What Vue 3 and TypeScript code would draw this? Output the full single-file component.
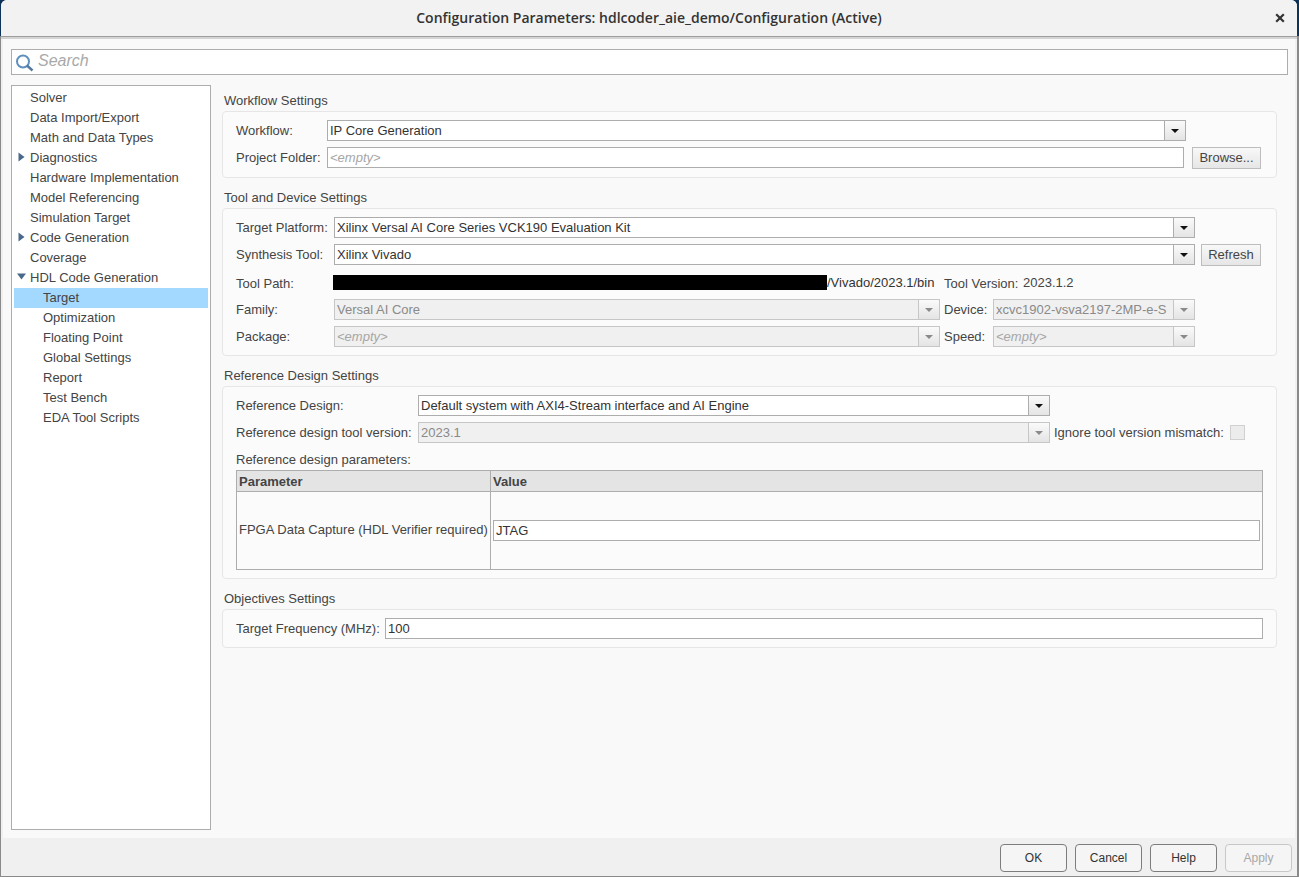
<script setup lang="ts">
const tree = [
  { label: 'Solver', level: 0 },
  { label: 'Data Import/Export', level: 0 },
  { label: 'Math and Data Types', level: 0 },
  { label: 'Diagnostics', level: 0, arrow: 'right' },
  { label: 'Hardware Implementation', level: 0 },
  { label: 'Model Referencing', level: 0 },
  { label: 'Simulation Target', level: 0 },
  { label: 'Code Generation', level: 0, arrow: 'right' },
  { label: 'Coverage', level: 0 },
  { label: 'HDL Code Generation', level: 0, arrow: 'down' },
  { label: 'Target', level: 1, selected: true },
  { label: 'Optimization', level: 1 },
  { label: 'Floating Point', level: 1 },
  { label: 'Global Settings', level: 1 },
  { label: 'Report', level: 1 },
  { label: 'Test Bench', level: 1 },
  { label: 'EDA Tool Scripts', level: 1 },
]
</script>

<template>
  <div class="window">
    <header class="titlebar">
      <h1 class="title">Configuration Parameters: hdlcoder_aie_demo/Configuration (Active)</h1>
      <svg class="close" width="10" height="10" viewBox="0 0 10 10" aria-label="Close">
        <path d="M1.2 1.2 8.8 8.8M8.8 1.2 1.2 8.8" stroke="#333" stroke-width="2.2" fill="none" />
      </svg>
    </header>
    <div class="band"></div>

    <main class="body">
      <div class="search">
        <svg width="18" height="20" viewBox="0 0 18 20" class="search-icon">
          <circle cx="7" cy="8.5" r="6" fill="none" stroke="#5f8fbd" stroke-width="2" />
          <path d="M11 12.5 16.5 17.5" stroke="#557a9f" stroke-width="2.4" fill="none" />
        </svg>
        <span class="search-text">Search</span>
      </div>

      <div class="columns">
        <nav class="tree">
          <div
            v-for="item in tree"
            :key="item.label"
            class="tree-row"
            :class="{ selected: item.selected, child: item.level === 1 }"
          >
            <svg v-if="item.arrow === 'right'" class="arrow" width="7" height="10" viewBox="0 0 7 10">
              <path d="M0.5 0.5 6.5 5 0.5 9.5Z" fill="#4a6a8c" />
            </svg>
            <svg v-if="item.arrow === 'down'" class="arrow down" width="9" height="7" viewBox="0 0 9 7">
              <path d="M0 0.5H9L4.5 6.5Z" fill="#4a6a8c" />
            </svg>
            {{ item.label }}
          </div>
        </nav>

        <section class="settings">
          <h2>Workflow Settings</h2>
          <div class="panel p-workflow">
            <div class="row">
              <label class="l91">Workflow:</label>
              <div class="combo w859">
                <span class="value">IP Core Generation</span>
                <span class="drop"><i class="tri"></i></span>
              </div>
            </div>
            <div class="row">
              <label class="l91">Project Folder:</label>
              <div class="field w857"><em>&lt;empty&gt;</em></div>
              <button class="btn browse">Browse...</button>
            </div>
          </div>

          <h2>Tool and Device Settings</h2>
          <div class="panel p-tool">
            <div class="row">
              <label class="l98">Target Platform:</label>
              <div class="combo w861">
                <span class="value">Xilinx Versal AI Core Series VCK190 Evaluation Kit</span>
                <span class="drop"><i class="tri"></i></span>
              </div>
            </div>
            <div class="row">
              <label class="l98">Synthesis Tool:</label>
              <div class="combo w861">
                <span class="value">Xilinx Vivado</span>
                <span class="drop"><i class="tri"></i></span>
              </div>
              <button class="btn refresh">Refresh</button>
            </div>
            <div class="row path-row">
              <label class="l97">Tool Path:</label>
              <span class="redact"></span>
              <span class="path">/Vivado/2023.1/bin</span>
              <label class="tv-label">Tool Version:</label>
              <span class="tv">2023.1.2</span>
            </div>
            <div class="row">
              <label class="l98">Family:</label>
              <div class="combo disabled w606">
                <span class="value">Versal AI Core</span>
                <span class="drop"><i class="tri"></i></span>
              </div>
              <label class="side">Device:</label>
              <div class="combo disabled w202">
                <span class="value">xcvc1902-vsva2197-2MP-e-S</span>
                <span class="drop"><i class="tri"></i></span>
              </div>
            </div>
            <div class="row">
              <label class="l98">Package:</label>
              <div class="combo disabled w606">
                <span class="value"><em>&lt;empty&gt;</em></span>
                <span class="drop"><i class="tri"></i></span>
              </div>
              <label class="side">Speed:</label>
              <div class="combo disabled w202">
                <span class="value"><em>&lt;empty&gt;</em></span>
                <span class="drop"><i class="tri"></i></span>
              </div>
            </div>
          </div>

          <h2>Reference Design Settings</h2>
          <div class="panel p-ref">
            <div class="row">
              <label class="l182">Reference Design:</label>
              <div class="combo w632">
                <span class="value">Default system with AXI4-Stream interface and AI Engine</span>
                <span class="drop"><i class="tri"></i></span>
              </div>
            </div>
            <div class="row">
              <label class="l182">Reference design tool version:</label>
              <div class="combo disabled w632">
                <span class="value">2023.1</span>
                <span class="drop"><i class="tri"></i></span>
              </div>
              <label class="ignore">Ignore tool version mismatch:</label>
              <span class="check"></span>
            </div>
            <div class="params-label">Reference design parameters:</div>
            <div class="table">
              <div class="thead">
                <div class="c1">Parameter</div>
                <div class="c2">Value</div>
              </div>
              <div class="tbody">
                <div class="c1">FPGA Data Capture (HDL Verifier required)</div>
                <div class="c2"><div class="field jtag">JTAG</div></div>
              </div>
            </div>
          </div>

          <h2>Objectives Settings</h2>
          <div class="panel p-obj">
            <div class="row">
              <label class="l149">Target Frequency (MHz):</label>
              <div class="field w878">100</div>
            </div>
          </div>
        </section>
      </div>
    </main>

    <footer class="footer">
      <button class="fbtn">OK</button>
      <button class="fbtn">Cancel</button>
      <button class="fbtn">Help</button>
      <button class="fbtn off">Apply</button>
    </footer>
  </div>
</template>

<style scoped>
.window {
  width: 1296px;
  height: 877px;
  margin-left: 1px;
  box-sizing: border-box;
  display: flex;
  flex-direction: column;
  overflow: hidden;
  background: #f9f9f9;
  border-bottom: 1px solid #8a8a8a;
  border-radius: 6px 6px 0 0;
  font: 13px/15px "Liberation Sans", Arial, sans-serif;
  color: #444;
}
.titlebar {
  height: 36px;
  flex: none;
  background: #f2f2f2;
  border-bottom: 1px solid #9d9d9d;
  display: flex;
  align-items: center;
  justify-content: center;
  position: relative;
}
.title {
  margin: 0;
  font: 600 14px/18px "Open Sans", "Liberation Sans", sans-serif;
  color: #333;
}
.close {
  position: absolute;
  right: 12px;
  top: 13px;
}
.band {
  height: 2px;
  flex: none;
  background: #d4d4d4;
}
.body {
  flex: 1;
  min-height: 0;
  padding: 10px 7px 0 8px;
  border-left: 2px solid #f0f0f0;
  border-right: 2px solid #f0f0f0;
  display: flex;
  flex-direction: column;
}
.search {
  height: 26px;
  flex: none;
  box-sizing: border-box;
  background: #fff;
  border: 1px solid #adadad;
  display: flex;
  align-items: center;
  padding-left: 4px;
  gap: 4px;
  font: italic 16px/20px "Liberation Sans", sans-serif;
  color: #a9a9a9;
}
.search-icon {
  margin-top: 2px;
}
.search-text {
  margin-bottom: 2px;
}
.columns {
  flex: 1;
  min-height: 0;
  display: flex;
  margin-top: 10px;
  margin-bottom: 8px;
}
.tree {
  width: 200px;
  flex: none;
  box-sizing: border-box;
  background: #fff;
  border: 1px solid #adadad;
  padding: 2px;
}
.tree-row {
  height: 20px;
  line-height: 20px;
  padding-left: 16px;
  position: relative;
}
.tree-row.child {
  padding-left: 29px;
}
.tree-row.selected {
  background: #a3d8ff;
}
.arrow {
  position: absolute;
  left: 4px;
  top: 4px;
}
.arrow.down {
  left: 3px;
  top: 5px;
}
.settings {
  flex: 1;
  min-width: 0;
  padding: 8px 11px 0 11px;
}
h2 {
  margin: 0 0 3px 2px;
  font: 13px/15px "Liberation Sans", Arial, sans-serif;
  color: #444;
  height: 15px;
}
.panel {
  box-sizing: border-box;
  background: #fbfbfb;
  border: 1px solid #e6e6e6;
  border-radius: 4px;
  padding: 8px 0 0 13px;
  display: flex;
  flex-direction: column;
  gap: 6px;
  margin-bottom: 12px;
}
.p-workflow {
  height: 67px;
}
.p-tool {
  height: 148px;
}
.p-ref {
  height: 193px;
}
.p-obj {
  height: 39px;
  margin-bottom: 0;
}
.row {
  display: flex;
  align-items: center;
  height: 21px;
  flex: none;
}
label {
  flex: none;
  white-space: nowrap;
}
.l91 { width: 91px; }
.l97 { width: 97px; }
.l98 { width: 98px; }
.l182 { width: 182px; }
.l149 { width: 149px; }
.combo,
.field {
  box-sizing: border-box;
  height: 21px;
  flex: none;
  background: #fff;
  border: 1px solid #adadad;
  display: flex;
  align-items: center;
  overflow: hidden;
  color: #333;
}
.field {
  padding-left: 2px;
}
em {
  color: #a6a6a6;
  font-style: italic;
}
.value {
  flex: 1;
  min-width: 0;
  padding-left: 2px;
  white-space: nowrap;
  overflow: hidden;
}
.drop {
  width: 21px;
  height: 19px;
  flex: none;
  box-sizing: border-box;
  border-left: 1px solid #adadad;
  background: linear-gradient(#fafafa, #e4e4e4);
  display: flex;
  align-items: center;
  justify-content: center;
}
.tri {
  width: 0;
  height: 0;
  border-left: 4px solid transparent;
  border-right: 4px solid transparent;
  border-top: 4px solid #111;
  margin-top: 1px;
}
.disabled {
  background: #f0f0f0;
  border-color: #c6c6c6;
  color: #8a8a8a;
}
.disabled .drop {
  border-left-color: #c6c6c6;
}
.disabled .tri {
  border-top-color: #8a8a8a;
}
.w859 { width: 859px; }
.w857 { width: 857px; }
.w861 { width: 861px; }
.w606 { width: 606px; }
.w202 { width: 202px; }
.w632 { width: 632px; }
.w878 { width: 878px; }
.btn {
  box-sizing: border-box;
  height: 22px;
  padding: 0;
  font: 13px/15px "Liberation Sans", Arial, sans-serif;
  color: #444;
  background: linear-gradient(#f8f8f8, #e6e6e6);
  border: 1px solid #bdbdbd;
  flex: none;
}
.browse {
  width: 69px;
  margin-left: 8px;
}
.refresh {
  width: 60px;
  margin-left: 6px;
}
.path-row {
  height: 15px;
  margin: 4px 0 3px;
}
.path-row .l97 {
  margin-top: 2px;
}
.redact {
  width: 494px;
  height: 15px;
  background: #000;
  flex: none;
}
.path {
  width: 117px;
  flex: none;
  color: #333;
}
.tv-label {
  width: 79px;
  margin-top: 2px;
}
.tv {
  color: #444;
}
.side {
  width: 53px;
  padding-left: 4px;
  box-sizing: border-box;
}
.ignore {
  margin-left: 4px;
  width: 176px;
}
.check {
  width: 15px;
  height: 15px;
  box-sizing: border-box;
  background: #ececec;
  border: 1px solid #d0d0d0;
  flex: none;
}
.params-label {
  height: 15px;
  margin-top: 3px;
  flex: none;
}
.table {
  width: 1027px;
  height: 100px;
  box-sizing: border-box;
  border: 1px solid #adadad;
  margin-top: -3px;
  flex: none;
  display: flex;
  flex-direction: column;
}
.thead {
  height: 21px;
  flex: none;
  display: flex;
  background: #e4e4e4;
  border-bottom: 1px solid #adadad;
  font-weight: bold;
  box-sizing: border-box;
}
.tbody {
  flex: 1;
  display: flex;
}
.c1 {
  width: 254px;
  flex: none;
  box-sizing: border-box;
  padding-left: 2px;
  border-right: 1px solid #adadad;
  display: flex;
  align-items: center;
  white-space: nowrap;
}
.tbody .c1 {
  padding-bottom: 2px;
}
.c2 {
  flex: 1;
  min-width: 0;
  padding-left: 2px;
  display: flex;
  align-items: center;
}
.jtag {
  width: 767px;
}
.footer {
  height: 38px;
  flex: none;
  background: #f0f0f0;
  box-sizing: border-box;
  padding: 6px 5px 0 0;
  display: flex;
  justify-content: flex-end;
  align-items: flex-start;
  gap: 8px;
}
.fbtn {
  width: 67px;
  height: 28px;
  box-sizing: border-box;
  padding: 0;
  background: #f5f5f5;
  border: 1px solid #7d7d7d;
  border-radius: 4px;
  font: 12px/15px "Liberation Sans", Arial, sans-serif;
  color: #333;
}
.fbtn.off {
  color: #a8a8a8;
  border-color: #c8c8c8;
}
</style>

<style>
html,
body {
  margin: 0;
  overflow: hidden;
}
html {
  background: linear-gradient(#0e3358 36px, #8a8a8a 36px);
}
</style>
